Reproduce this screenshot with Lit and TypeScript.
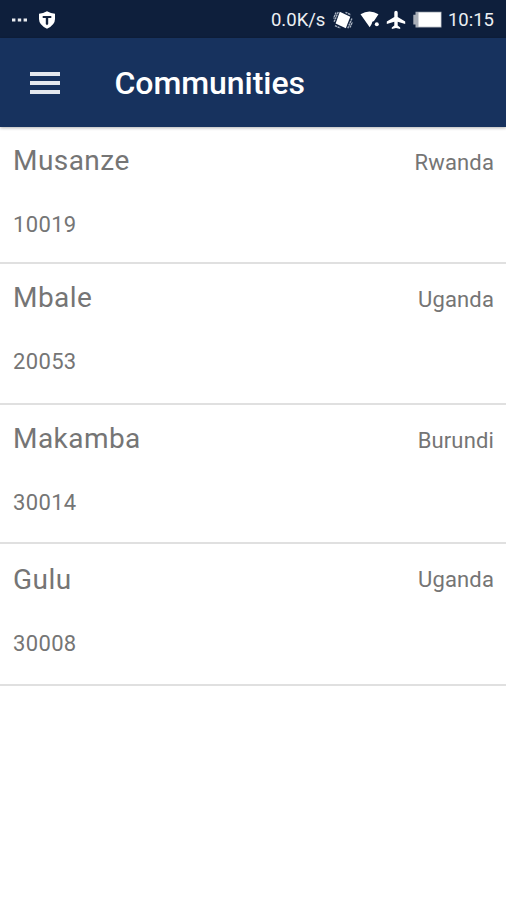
import { LitElement, html, css } from "lit";
import { customElement } from "lit/decorators.js";

const rows = [
  { name: "Musanze", country: "Rwanda", code: "10019", cls: "r1" },
  { name: "Mbale", country: "Uganda", code: "20053", cls: "r2" },
  { name: "Makamba", country: "Burundi", code: "30014", cls: "r3" },
  { name: "Gulu", country: "Uganda", code: "30008", cls: "r4" },
];

@customElement("app-root")
export class AppRoot extends LitElement {
  static styles = css`
    :host { display: block; height: 900px; background: #fff; font-family: Roboto, sans-serif; overflow: hidden; }
    * { box-sizing: border-box; }
    .status { height: 38px; background: #0e1f3c; color: #eceff3; display: flex; align-items: center; padding: 1px 12px 0 11px; font-size: 18.5px; }
    .status svg { display: block; flex: none; }
    .shield { margin-left: 10px; }
    .icons { display: flex; gap: 6.5px; margin: 0 6px 0 8px; }
    .spacer { flex: 1; }
    .bar { height: 89px; background: #17325e; display: flex; align-items: center; padding-left: 30px; gap: 54.5px; box-shadow: 0 1px 3px rgba(0,0,0,.3); position: relative; }
    h1 { margin: 0; color: #fff; font-size: 32px; font-weight: 500; line-height: 38px; letter-spacing: -.05px; }
    .row { border-bottom: 2px solid #e0e0e0; padding: 17px 12px 0 13px; color: #757575; }
    .r1 { height: 137px; } .r2 { height: 141px; } .r3 { height: 139px; } .r4 { height: 142px; padding-top: 19px; }
    .top { display: flex; justify-content: space-between; align-items: flex-start; height: 34px; }
    .name { font-size: 28px; line-height: 34px; letter-spacing: .45px; }
    .small { font-size: 22px; letter-spacing: .35px; }
    .country { line-height: 28px; padding-top: 5px; letter-spacing: .15px; }
    .r4 .country { padding-top: 3px; }
    .code { margin-top: 33px; line-height: 28px; }
  `;
  render() {
    return html`
      <div class="status">
        <svg width="17" height="18" viewBox="0 0 17 18" fill="#e8ebef"><path d="M1 7.5h3.4v3H1zM6.8 7.5h3.4v3H6.8zM12.6 7.5H16v3h-3.4z"/></svg>
        <svg class="shield" width="18" height="18" viewBox="0 0 18 18"><path d="M9 .3Q13 2.5 17 2.7V8q0 6-8 9.7Q1 14 1 8V2.7Q5 2.5 9 .3z" fill="#fff"/><path d="M4.7 5h8.6v2h-3.1v6L9 14.2 7.8 13V7H4.700z" fill="#14233d"/></svg>
        <span class="spacer"></span>
        <span>0.0K/s</span>
        <div class="icons">
          <svg width="20" height="20" viewBox="0 0 20 20"><path d="M6.8 1.8L17.300 6.700 12.800 18.300 2.600 13.400z" fill="#fff"/><path d="M5.200 2L1 12M3 2.500L.6 8.500M14.800 18.200l4.200-10M17 17.600l2.300-5.500M12.500 2.300l5.300 2.500M2 15.600l5.300 2.500" fill="none" stroke="#a9b2c0" stroke-width="1.400" stroke-dasharray="2.200 .6"/></svg>
          <svg width="20" height="20" viewBox="0 0 20 20"><path d="M.5 4.200Q9.500-1 18.500 4.200L14 11q-2.300.4-2.200 2.800L9.700 17.200z" fill="#fff"/><circle cx="16.800" cy="14.300" r="2" fill="#fff"/></svg>
          <svg width="20" height="20" viewBox="0 0 20 20"><path d="M10 .8q1.700 0 1.700 1.700v4.600l7.500 4.500v2.500l-7.500-2.300v3.600l2.500 2V19L10 17.900 5.800 19v-1.600l2.500-2v-3.600L.8 14.100v-2.500l7.500-4.500V2.500Q8.300.8 10 .8z" fill="#fff"/></svg>
          <svg width="29" height="20" viewBox="0 0 29 20"><path d="M2.500 1.700h26v15.800h-26v-3H.3V4.700h2.200z" fill="#a9afb8"/><path d="M5.500 2.500h22.300v14.200H5.500z" fill="#fff"/></svg>
        </div>
        <span>10:15</span>
      </div>
      <div class="bar">
        <svg width="30" height="22" viewBox="0 0 30 22" fill="#e4e8ef"><path d="M0 0h30v4H0zM0 9h30v4H0zM0 18h30v4H0z"/></svg>
        <h1>Communities</h1>
      </div>
      ${rows.map((r) => html`<div class="row ${r.cls}"><div class="top"><span class="name">${r.name}</span><span class="small country">${r.country}</span></div><div class="small code">${r.code}</div></div>`)}
    `;
  }
}
